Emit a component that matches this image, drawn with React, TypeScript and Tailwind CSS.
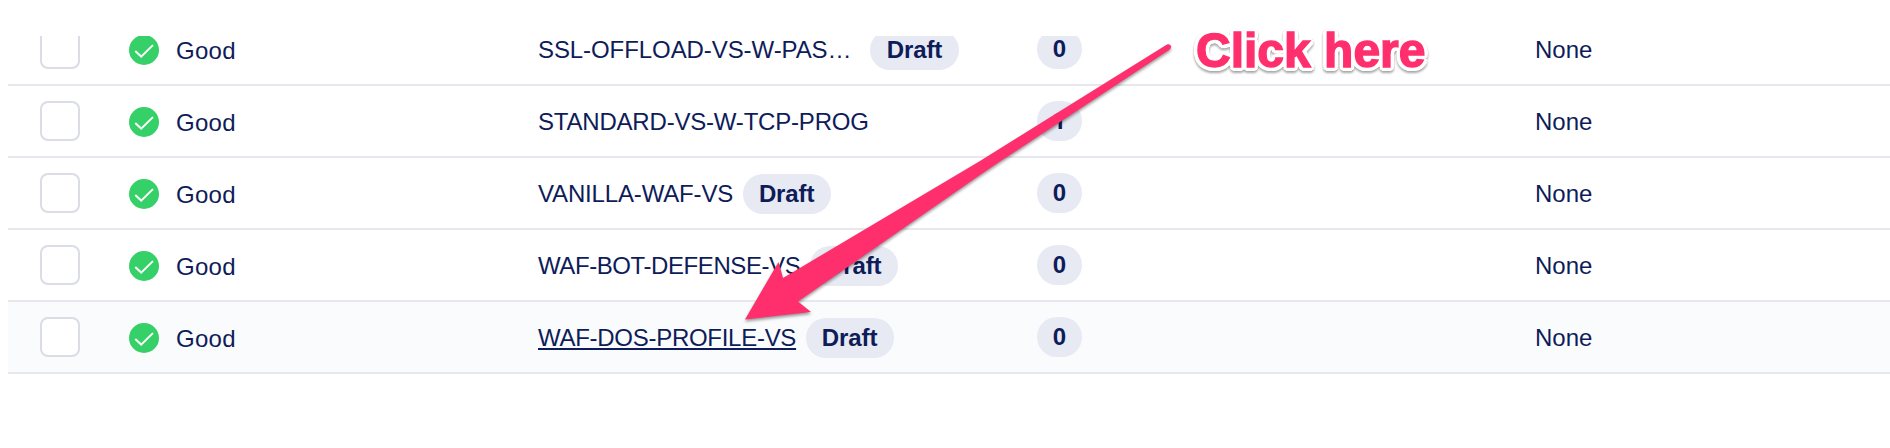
type Row = { name: string; spacing: string; draft: boolean; truncated?: boolean; count: number; active?: boolean };

const rows: Row[] = [
  { name: "SSL-OFFLOAD-VS-W-PAS…", spacing: "tracking-[-0.08px]", draft: true, truncated: true, count: 0 },
  { name: "STANDARD-VS-W-TCP-PROG", spacing: "tracking-[-0.2px]", draft: false, count: 1 },
  { name: "VANILLA-WAF-VS", spacing: "tracking-[-0.16px]", draft: true, count: 0 },
  { name: "WAF-BOT-DEFENSE-VS", spacing: "tracking-[-0.42px]", draft: true, count: 0 },
  { name: "WAF-DOS-PROFILE-VS", spacing: "tracking-[-0.28px]", draft: true, count: 0, active: true },
];

function StatusIcon() {
  return (
    <svg className="mt-[2px] h-[30px] w-[30px] shrink-0" viewBox="0 0 30 30" fill="none">
      <circle cx="15" cy="15" r="15" fill="#36d068" />
      <path d="M6.800 16.600 12.200 21.600 23.400 10.600" stroke="#fff" strokeWidth="2" strokeLinecap="round" />
    </svg>
  );
}

function TableRow({ row }: { row: Row }) {
  return (
    <div className={`flex h-[72px] shrink-0 items-center border-b-2 border-[#e7e8ed] ${row.active ? "bg-[#fafbfd]" : "bg-white"}`}>
      <div className="w-[121px] shrink-0 pl-8">
        <div className="h-10 w-10 rounded-lg border-2 border-[#dadde6] bg-white" />
      </div>
      <div className="flex w-[409px] shrink-0 items-center">
        <StatusIcon />
        <span className="ml-[17px] mt-[4px] tracking-[0.3px]">Good</span>
      </div>
      <div className="flex w-[499px] shrink-0 items-center whitespace-nowrap">
        <span className={`mt-[2px] ${row.spacing} ${row.active ? "underline decoration-2 underline-offset-[2px] [text-decoration-skip-ink:none]" : ""}`}>{row.name}</span>
        {row.draft && (
          <span className={`mt-[2px] flex h-10 items-center justify-center rounded-full bg-[#e7e9f3] pr-px font-bold tracking-[-0.1px] ${row.truncated ? "ml-[19px] w-[89px]" : "ml-[10px] w-[88px]"}`}>
            Draft
          </span>
        )}
      </div>
      <div className="w-[498px] shrink-0">
        <span className={`flex h-10 w-[45px] items-center justify-center rounded-full bg-[#e7e9f3] font-bold ${row.count === 1 ? "font-[Roboto,sans-serif]" : ""}`}>{row.count}</span>
      </div>
      <span className="mt-[2px]">None</span>
    </div>
  );
}

export default function App() {
  return (
    <div className="relative h-[448px] w-full overflow-hidden bg-white pt-9 font-['Liberation_Sans',Arial,sans-serif] text-2xl text-[#0e1c59]">
      <div className="ml-2 flex h-[338px] flex-col justify-end overflow-hidden">
        {rows.map((row) => (
          <TableRow key={row.name} row={row} />
        ))}
      </div>
      <svg className="absolute left-0 top-0 h-[448px] w-[1890px] drop-shadow-[0_2px_1.5px_rgba(0,0,0,0.4)]" viewBox="0 0 1890 448">
        <path
          d="M745 319.500 778.500 262 783 278 980 161 1000 148.500 1167 44.500Q1170 43.500 1171 46Q1171.500 48.500 1169 50L1000 161.500 980 175 798 301.500 811 312Z"
          fill="#ff2f6d"
        />
      </svg>
      <div className="absolute left-[1196px] top-[23px] whitespace-nowrap text-[48px] leading-[55px] font-bold text-[#ff2f6d] drop-shadow-[0_2px_1px_rgba(0,0,0,0.35)] [-webkit-text-stroke:1.4px_#ff2f6d] [text-shadow:4px_0_white,-4px_0_white,0_4px_white,0_-4px_white,3px_3px_white,-3px_3px_white,3px_-3px_white,-3px_-3px_white,3.7px_1.5px_white,-3.7px_1.5px_white,3.7px_-1.5px_white,-3.7px_-1.5px_white,1.5px_3.7px_white,-1.5px_3.7px_white,1.5px_-3.7px_white,-1.5px_-3.7px_white]">
        Click here
      </div>
    </div>
  );
}
